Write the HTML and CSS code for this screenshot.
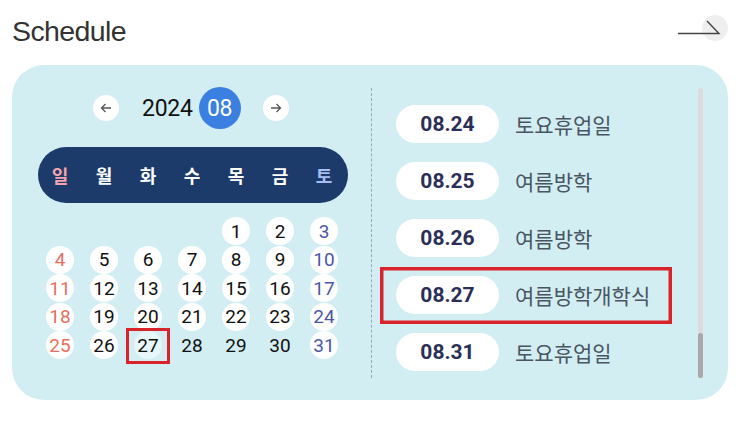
FILE: index.html
```html
<!DOCTYPE html>
<html lang="ko">
<head>
<meta charset="utf-8">
<title>Schedule</title>
<link rel="stylesheet" href="styles.css">
</head>
<body>
<header class="top">
  <h2 class="title">Schedule</h2>
  <a class="more" href="#" aria-label="more">
    <svg width="50" height="30" viewBox="0 0 50 30">
      <circle cx="37" cy="13" r="13" fill="#efefef"/>
      <path d="M0 18.5 H41 L29 6" fill="none" stroke="#444" stroke-width="1.4"/>
    </svg>
  </a>
</header>
<section class="card">
  <div class="cal">
    <div class="cal-head">
      <span class="nav">
        <svg width="12" height="12" viewBox="0 0 12 12"><path d="M11 6 H1.5 M5.5 2 L1.5 6 L5.5 10" fill="none" stroke="#555" stroke-width="1.3"/></svg>
      </span>
      <span class="year">2024</span>
      <span class="month">08</span>
      <span class="nav">
        <svg width="12" height="12" viewBox="0 0 12 12"><path d="M1 6 H10.5 M6.5 2 L10.5 6 L6.5 10" fill="none" stroke="#555" stroke-width="1.3"/></svg>
      </span>
    </div>
    <div class="weekdays">
      <span class="sun">일</span><span>월</span><span>화</span><span>수</span><span>목</span><span>금</span><span class="sat">토</span>
    </div>
    <div class="days">
      <span class="day"></span><span class="day"></span><span class="day"></span><span class="day"></span>
      <span class="day"><i>1</i></span><span class="day"><i>2</i></span><span class="day sat"><i>3</i></span>
      <span class="day sun"><i>4</i></span><span class="day"><i>5</i></span><span class="day"><i>6</i></span><span class="day"><i>7</i></span><span class="day"><i>8</i></span><span class="day"><i>9</i></span><span class="day sat"><i>10</i></span>
      <span class="day sun"><i>11</i></span><span class="day"><i>12</i></span><span class="day"><i>13</i></span><span class="day"><i>14</i></span><span class="day"><i>15</i></span><span class="day"><i>16</i></span><span class="day sat"><i>17</i></span>
      <span class="day sun"><i>18</i></span><span class="day"><i>19</i></span><span class="day"><i>20</i></span><span class="day"><i>21</i></span><span class="day"><i>22</i></span><span class="day"><i>23</i></span><span class="day sat"><i>24</i></span>
      <span class="day sun"><i>25</i></span><span class="day"><i>26</i></span><span class="day today"><i>27</i></span><span class="day plain"><i>28</i></span><span class="day plain"><i>29</i></span><span class="day plain"><i>30</i></span><span class="day sat"><i>31</i></span>
    </div>
  </div>
  <div class="divider"></div>
  <div class="events">
    <ul class="event-list">
      <li class="event"><span class="pill">08.24</span><span class="name">토요휴업일</span></li>
      <li class="event"><span class="pill">08.25</span><span class="name">여름방학</span></li>
      <li class="event"><span class="pill">08.26</span><span class="name">여름방학</span></li>
      <li class="event pick"><span class="pill">08.27</span><span class="name">여름방학개학식</span></li>
      <li class="event"><span class="pill">08.31</span><span class="name">토요휴업일</span></li>
    </ul>
    <div class="scrollbar"><div class="thumb"></div></div>
  </div>
</section>
</body>
</html>
```
FILE: styles.css
```css
html, body {
  margin: 0;
  padding: 0;
  background: #fff;
}
body {
  width: 743px;
  font-family: Roboto, "Noto Sans CJK KR", sans-serif;
}
.top {
  display: flex;
  justify-content: space-between;
  align-items: center;
  height: 60px;
  padding: 0 15px 0 12px;
  box-sizing: border-box;
}
.title {
  margin: 2px 0 0;
  font: 400 28.5px "Liberation Sans", Arial, sans-serif;
  letter-spacing: -0.6px;
  color: #333;
}
.more {
  display: block;
  width: 50px;
  height: 30px;
}
.more svg {
  display: block;
}
.card {
  margin: 5px 0 0 12px;
  width: 716px;
  height: 335px;
  background: #d3eef3;
  border-radius: 32px;
  display: flex;
}
.cal {
  width: 359px;
  box-sizing: border-box;
  padding: 22px 0 0 26px;
}
.cal-head {
  display: flex;
  align-items: center;
  padding-left: 55px;
  height: 42px;
}
.nav {
  width: 26px;
  height: 26px;
  border-radius: 50%;
  background: #fff;
  display: flex;
  align-items: center;
  justify-content: center;
}
.nav svg {
  display: block;
}
.year {
  margin: 0 6px 0 23px;
  font-size: 23px;
  color: #111;
  letter-spacing: -0.3px;
}
.month {
  width: 42px;
  height: 42px;
  border-radius: 50%;
  background: #3b7fe0;
  color: #fff;
  font-size: 23px;
  display: flex;
  align-items: center;
  justify-content: center;
  margin-right: 22px;
  letter-spacing: -0.3px;
}
.weekdays {
  margin-top: 18px;
  width: 310px;
  height: 56px;
  border-radius: 28px;
  background: #1c3b6b;
  display: grid;
  grid-template-columns: repeat(7, 44px);
  align-items: center;
  justify-items: center;
  font: 700 18px "Noto Sans CJK KR", sans-serif;
  color: #fff;
}
.weekdays .sun { color: #f5a3ab; }
.weekdays .sat { color: #a6bff2; }
.days {
  margin-top: 14px;
  display: grid;
  grid-template-columns: repeat(7, 44px);
  grid-auto-rows: 28.5px;
}
.day {
  display: flex;
  align-items: center;
  justify-content: center;
  position: relative;
}
.day i {
  font-style: normal;
  width: 28px;
  height: 28px;
  border-radius: 50%;
  background: #fff;
  display: flex;
  align-items: center;
  justify-content: center;
  font-size: 19px;
  color: #111;
}
.day.sun i { color: #e56f61; }
.day.sat i { color: #4b57a5; }
.day.plain i { background: transparent; }
.day.today i { background: rgba(255,255,255,0.45); }
.day.today::after {
  content: "";
  position: absolute;
  left: 0;
  right: 0;
  top: -3px;
  bottom: -4px;
  border: 3px solid #d8232a;
}
.divider {
  margin: 23px 0 22px;
  border-left: 1px dashed #93a9b4;
}
.events {
  flex: 1;
  display: flex;
  padding-left: 8px;
}
.event-list {
  list-style: none;
  margin: 0;
  padding: 30.5px 0 0;
  width: 318px;
}
.event {
  display: flex;
  align-items: center;
  height: 57px;
  width: 292px;
  box-sizing: border-box;
  padding-left: 16px;
}
.event.pick {
  box-shadow: inset 0 0 0 3.5px #d8232a;
}
.pill {
  width: 103px;
  height: 38px;
  border-radius: 19px;
  background: #fff;
  display: flex;
  align-items: center;
  justify-content: center;
  font: 700 21px Roboto, sans-serif;
  color: #2b2f57;
}
.name {
  margin-left: 16px;
  font: 400 21px "Noto Sans CJK KR", sans-serif;
  color: #4a5562;
}
.scrollbar {
  margin-top: 23px;
  width: 5px;
  height: 290px;
  border-radius: 3px;
  background: #dcdcdc;
  display: flex;
  flex-direction: column;
  justify-content: flex-end;
}
.thumb {
  height: 45px;
  border-radius: 3px;
  background: #a9a9a9;
}
```
